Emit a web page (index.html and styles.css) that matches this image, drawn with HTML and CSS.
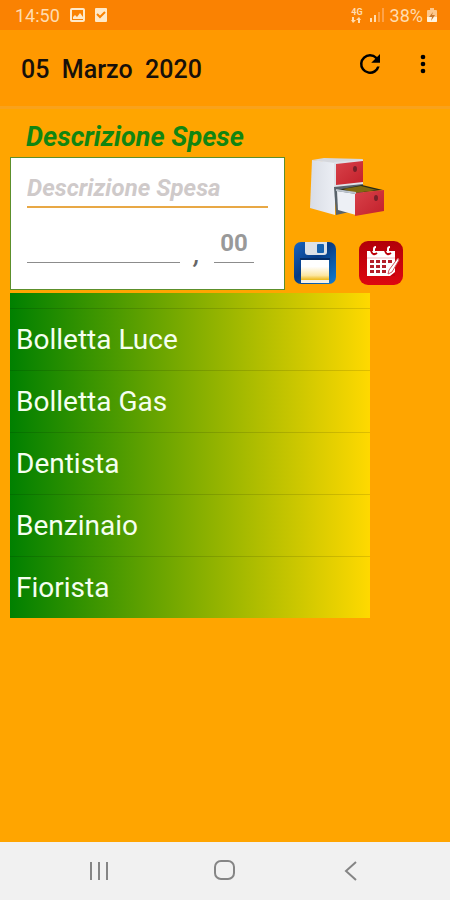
FILE: index.html
```html
<!DOCTYPE html>
<html lang="it">
<head>
  <meta charset="UTF-8">
  <meta name="viewport" content="width=device-width, initial-scale=1.0">
  <title>Descrizione Spese</title>
  <link rel="stylesheet" href="styles.css">
</head>
<body>

  <div class="status-bar">
    <span class="clock">14:50</span>
    <svg class="status-icon" width="15" height="15" viewBox="0 0 15 15">
      <rect x="1" y="1" width="13" height="12" rx="1" fill="none" stroke="#ffe9c9" stroke-width="2"/>
      <path d="M3 11V9l2-2 2 2 3-4 3 4v2z" fill="#ffe9c9"/>
    </svg>
    <svg class="status-icon" width="12" height="15" viewBox="0 0 12 15">
      <rect width="12" height="14" rx="1" fill="#ffe9c9"/>
      <path d="M2 6l3 3 5-5" fill="none" stroke="#fa8202" stroke-width="2"/>
    </svg>
    <span class="network"><span>4G</span>
      <svg width="10" height="6" viewBox="0 0 10 6" fill="#ffdcb0"><path d="M0 3h1V0h2v3h2L2 6zM5 3l3-3 2 3H9v3H7V3z"/></svg>
    </span>
    <svg class="signal" width="14" height="14" viewBox="0 0 14 14">
      <path d="M0 10h2v4H0zM4 7h2v7H4z" fill="#ffdcb0"/>
      <path d="M8 4h2v10H8zM12 0h2v14h-2z" fill="#fda24a"/>
    </svg>
    <span>38%</span>
    <svg class="battery" width="10" height="14" viewBox="0 0 10 14">
      <path d="M3 0h4v2h2q1 0 1 1v10q0 1-1 1H1q-1 0-1-1V3q0-1 1-1h2z" fill="#fdc78c"/>
      <path d="M0 9h10v4q0 1-1 1H1q-1 0-1-1z" fill="#fff3e0"/>
      <path d="M6 4L2 9h3l-1 4 4-6H5z" fill="#c9782c"/>
    </svg>
  </div>

  <header class="app-bar">
    <h1>05  Marzo  2020</h1>
    <button class="icon-button" aria-label="Aggiorna">
      <svg width="30" height="30" viewBox="0 0 24 24"><path d="M17.65 6.35A7.96 7.96 0 0 0 12 4a8 8 0 1 0 7.73 10h-2.08A6 6 0 1 1 12 6c1.66 0 3.14.69 4.22 1.78L13 11h7V4z"/></svg>
    </button>
    <button class="icon-button" aria-label="Menu">
      <svg width="28" height="28" viewBox="0 0 24 24"><circle cx="12" cy="6" r="2"/><circle cx="12" cy="12" r="2"/><circle cx="12" cy="18" r="2"/></svg>
    </button>
  </header>

  <main>
    <h2>Descrizione Spese</h2>

    <div class="entry">
      <form class="expense-form">
        <input class="description" type="text" placeholder="Descrizione Spesa" aria-label="Descrizione Spesa">
        <div class="amount">
          <input class="euro" type="text" aria-label="Euro">
          <span class="comma">,</span>
          <input class="cents" type="text" placeholder="00" aria-label="Centesimi">
        </div>
      </form>

      <div class="actions">
        <button class="icon-button archive" aria-label="Archivio">
          <svg width="76" height="60" viewBox="0 0 76 60">
            <defs>
              <linearGradient id="side" x1="0" x2="1"><stop offset="0" stop-color="#d9dde5"/><stop offset="1" stop-color="#eceff5"/></linearGradient>
              <linearGradient id="front" x1="0" x2="1" y2="1"><stop offset="0" stop-color="#d8424a"/><stop offset="1" stop-color="#c3202b"/></linearGradient>
            </defs>
            <path d="M3 3L15 1l39 1-1 3-28 2z" fill="#d6d8dd"/>
            <path d="M3 3l23 3v52L1 51z" fill="url(#side)"/>
            <path d="M25 5l29-2v25l-29 3z" fill="#dfe2e8"/>
            <path d="M27 7l27-3v21l-27 3z" fill="url(#front)"/>
            <path d="M25 30l29-3v25l-27 6z" fill="#59636b"/>
            <path d="M28 33l25-5 21 5-28 3z" fill="#282b17"/>
            <path d="M34 32l18-3 16 4-22 3z" fill="#806a10"/>
            <path d="M28 34l19 3v21l-18-5z" fill="#edf0f5"/>
            <path d="M46 36l29-3v21l-29 5z" fill="url(#front)"/>
            <path d="M27 33l20 3" stroke="#bdc5cd" stroke-width="2"/>
            <ellipse cx="46" cy="12" rx="2" ry="3" fill="#782028"/>
            <ellipse cx="67" cy="41" rx="2" ry="3" fill="#782028"/>
          </svg>
        </button>
        <div class="action-row">
          <button class="icon-button" type="button" aria-label="Salva">
            <svg width="44" height="44" viewBox="0 0 44 44">
              <defs>
                <linearGradient id="disk" x1="0" x2="1" y2="1"><stop offset="0" stop-color="#1765c2"/><stop offset=".45" stop-color="#073b84"/><stop offset="1" stop-color="#137ed2"/></linearGradient>
                <linearGradient id="label" x2="0" y2="1"><stop offset=".3" stop-color="#fff"/><stop offset=".7" stop-color="#fce6a0"/><stop offset=".88" stop-color="#efbe28"/></linearGradient>
              </defs>
              <rect x="1" y="1" width="42" height="42" rx="7" fill="url(#disk)"/>
              <path d="M12 1h22v10q0 3-3 3H15q-3 0-3-3z" fill="#dce1e7"/>
              <rect x="24" y="3" width="7" height="9" rx="1" fill="#1762ae"/>
              <path d="M8 19h28v22H8z" fill="url(#label)"/>
              <path d="M7 18h30" stroke="#052e68" stroke-width="2"/>
              <path d="M8 39h28v3H8z" fill="#f6f1e5"/>
            </svg>
          </button>
          <button class="icon-button" type="button" aria-label="Calendario">
            <svg width="44" height="44" viewBox="0 0 44 44">
              <defs><linearGradient id="cal" x2="0" y2="1"><stop offset="0" stop-color="#b10009"/><stop offset="1" stop-color="#dd0710"/></linearGradient></defs>
              <rect width="44" height="44" rx="9" fill="url(#cal)"/>
              <path d="M8 10h28v25H8z" fill="#fff"/>
              <path d="M12 10q2 5 6 2M26 10q2 5 6 2" fill="none" stroke="#bd000a" stroke-width="2"/>
              <path d="M15 12V8q0-2 2-2M29 12V8q0-2 2-2" fill="none" stroke="#fff" stroke-width="2"/>
              <path d="M8 17h28" stroke="#efb9bd"/>
              <path d="M11 19h4v3h-4zM17 19h4v3h-4zM23 19h4v3h-4zM29 19h4v3h-4zM11 24h4v3h-4zM17 24h4v3h-4zM23 24h4v3h-4zM11 29h4v3h-4zM17 29h4v3h-4zM23 29h4v3h-4z" fill="#b3202a"/>
              <path d="M39 17L30 29l-1 4 4-2 7-12z" fill="#fff" stroke="#d1545b"/>
              <path d="M31 35l5-4v4z" fill="#c5000b"/>
            </svg>
          </button>
        </div>
      </div>
    </div>

    <ul class="expense-list">
      <li>Bolletta Luce</li>
      <li>Bolletta Gas</li>
      <li>Dentista</li>
      <li>Benzinaio</li>
      <li>Fiorista</li>
    </ul>
  </main>

  <nav class="nav-bar">
    <button class="icon-button" aria-label="Recenti">
      <svg width="24" height="24" viewBox="0 0 24 24"><path d="M4 3v18M12 3v18M20 3v18"/></svg>
    </button>
    <button class="icon-button" aria-label="Home">
      <svg width="24" height="24" viewBox="0 0 24 24"><rect x="2" y="2" width="19" height="18" rx="6"/></svg>
    </button>
    <button class="icon-button" aria-label="Indietro">
      <svg width="24" height="24" viewBox="0 0 24 24"><path d="M17 3l-10 9 10 9"/></svg>
    </button>
  </nav>

</body>
</html>
```
FILE: styles.css
```css
:root {
  --background-color: #ffa500;
  --bar-color: #ff9900;
  --green: #118511;
}

* {
  box-sizing: border-box;
}

body {
  margin: 0;
  min-height: 100vh;
  display: flex;
  flex-direction: column;
  font-family: Roboto, "Liberation Sans", sans-serif;
  background: var(--background-color);
}

svg {
  display: block;
}

.status-bar {
  height: 30px;
  padding: 0 13px 0 15px;
  display: flex;
  align-items: center;
  background: #fa8202;
  color: #ffdcb0;
  font-size: 18px;
}

.status-icon {
  margin-left: 10px;
}

.network {
  margin-left: auto;
  font-size: 9px;
  line-height: 9px;
  font-weight: bold;
}

.signal {
  margin: 0 6px 0 7px;
}

.battery {
  margin-left: 4px;
}

.app-bar {
  height: 79px;
  padding: 2px 13px 0 21px;
  display: flex;
  align-items: center;
  gap: 24px;
  background: var(--bar-color);
  border-bottom: 3px solid #f9a21c;
}

h1 {
  flex: 1;
  margin: 0;
  font-size: 25px;
  font-weight: 500;
  white-space: pre;
  color: #17100a;
}

.icon-button {
  padding: 0;
  border: none;
  background: none;
  cursor: pointer;
}

.app-bar .icon-button {
  margin-bottom: 10px;
}

main {
  flex: 1;
  padding: 12px 10px;
}

h2 {
  margin: 0 0 4px 16px;
  font-size: 27px;
  line-height: 32px;
  font-weight: bold;
  font-style: italic;
  color: var(--green);
}

.entry {
  display: flex;
  gap: 8px;
}

.expense-form {
  flex: 1;
  min-width: 0;
  padding: 12px 16px 26px;
  background: #fff;
  border: 1px solid #5c8f2c;
}

input {
  display: block;
  min-width: 0;
  padding: 0;
  border: none;
  border-bottom: 1px solid #8c8c8c;
  border-radius: 0;
  outline: none;
  background: none;
  font: bold 24px Roboto, "Liberation Sans", sans-serif;
}

.description {
  width: 100%;
  height: 38px;
  border-bottom: 2px solid #e8a845;
  font-style: italic;
}

.description::placeholder {
  color: #cfcaca;
}

.amount {
  display: flex;
  align-items: flex-end;
  margin-top: 15px;
  padding-right: 14px;
}

.euro {
  flex: 1;
  height: 40px;
}

.comma {
  width: 34px;
  height: 40px;
  padding-top: 15px;
  text-align: center;
  font-size: 26px;
  line-height: 32px;
  font-weight: 500;
  font-style: italic;
  color: #666;
}

.cents {
  width: 40px;
  height: 40px;
  text-align: center;
}

.cents::placeholder {
  color: #999;
}

.actions {
  flex: none;
  width: 147px;
  padding-bottom: 5px;
  display: flex;
  flex-direction: column;
  justify-content: space-between;
}

.archive {
  align-self: flex-start;
  margin-left: 16px;
}

.action-row {
  display: flex;
  gap: 22px;
}

.expense-list {
  width: 360px;
  max-width: 100%;
  margin: 3px 0 0;
  padding: 15px 0 0;
  list-style: none;
  background: linear-gradient(to right, #008000, #ffd900);
}

.expense-list li {
  padding-left: 6px;
  border-top: 1px solid rgba(0, 0, 0, 0.12);
  font-size: 28px;
  line-height: 61px;
  color: #f5fff0;
}

.nav-bar {
  height: 58px;
  padding: 0 36px;
  display: flex;
  align-items: center;
  justify-content: space-around;
  background: #f1f1f1;
}

.nav-bar svg {
  fill: none;
  stroke: #858585;
  stroke-width: 2;
}
```
